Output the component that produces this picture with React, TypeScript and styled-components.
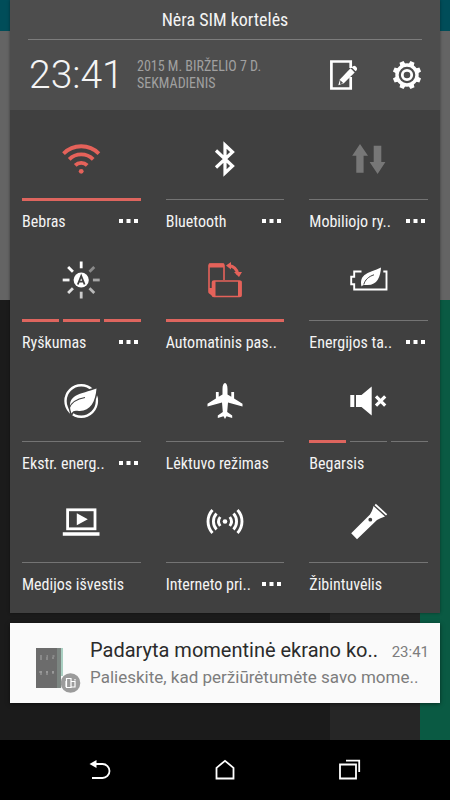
import React from "react";
import styled, { createGlobalStyle } from "styled-components";

const ACCENT = "#e5625a";
const PANEL = "#404040";
const CONDENSED = '"Roboto Condensed", "Liberation Sans Narrow", Roboto, sans-serif';

const GlobalStyle = createGlobalStyle`
  *, *::before, *::after { box-sizing: border-box; }
  body { margin: 0; background: #000; font-family: Roboto, sans-serif; }
  button { margin: 0; padding: 0; border: 0; background: none; color: inherit; font: inherit; cursor: pointer; }
  svg { display: block; }
`;

const Screen = styled.div`
  min-height: 100vh;
  display: flex;
  flex-direction: column;
`;

const Wallpaper = styled.main`
  flex: 1;
  padding: 0 10px;
  background:
    linear-gradient(#004d59, #004d59) 0 0 / 100% 31px no-repeat,
    linear-gradient(#646464, #646464) 0 31px / 100% 269px no-repeat,
    linear-gradient(#0a5a43, #0a5a43) 100% 300px / 30px 100% no-repeat,
    linear-gradient(#262626, #262626) 100% 300px / 120px 100% no-repeat,
    #1b1b1b;
`;

const Shade = styled.section`
  background: ${PANEL};
  color: #f4f4f4;
  box-shadow: 0 0 3px rgba(0, 0, 0, 0.4);
`;

const Header = styled.header`
  padding: 0 18px;
  background: #4d4d4d;
`;

const Carrier = styled.div`
  height: 40px;
  border-bottom: 1px solid #7c7c7c;
  font: 400 18px/40px ${CONDENSED};
  text-align: center;
`;

const StatusRow = styled.div`
  display: flex;
  align-items: center;
  height: 70px;
`;

const Clock = styled.time`
  width: 109px;
  padding-left: 1px;
  font: 300 39px/46px Roboto, sans-serif;
`;

const DateText = styled.div`
  flex: 1;
  color: #a0a0a0;
  font: 400 14px/17px ${CONDENSED};
`;

const HeaderActions = styled.div`
  display: flex;
  gap: 34px;
`;

const TileGrid = styled.div`
  display: grid;
  grid-template-columns: repeat(3, minmax(0, 1fr));
  column-gap: 25px;
  padding: 0 12px 19px;
`;

const Tile = styled.div`
  height: 121px;
`;

const Toggle = styled.button<{ $tone: string }>`
  display: flex;
  flex-direction: column;
  align-items: center;
  width: 100%;
  height: 91px;
  padding-top: 29px;
  color: ${(p) => p.$tone};
`;

const Bars = styled.span`
  display: flex;
  align-items: center;
  gap: 4px;
  width: 100%;
  height: 3px;
  margin-top: 19px;
`;

const Bar = styled.span<{ $on: boolean }>`
  flex: 1;
  height: ${(p) => (p.$on ? 3 : 1)}px;
  background: ${(p) => (p.$on ? "#de655e" : "#747474")};
`;

const Caption = styled.div`
  display: flex;
  align-items: center;
  justify-content: space-between;
  height: 30px;
  padding: 12px 3px 0 0;
`;

const Label = styled.span`
  white-space: nowrap;
  font: 400 16px/18px ${CONDENSED};
`;

const Card = styled.article`
  display: flex;
  margin-top: 10px;
  height: 80px;
  padding: 15px 11px 0 25px;
  background: #fafafa;
  box-shadow: 0 1px 4px rgba(0, 0, 0, 0.5);
`;

const Thumb = styled.div`
  flex: none;
  width: 55px;
  padding-top: 9px;
`;

const CardText = styled.div`
  flex: 1;
  min-width: 0;
  white-space: nowrap;
`;

const CardTop = styled.div`
  display: flex;
  align-items: baseline;
  justify-content: space-between;
`;

const CardTitle = styled.h2`
  margin: 0;
  color: #2b2b2b;
  font: 400 20px/25px Roboto, sans-serif;
`;

const CardTime = styled.time`
  color: #7d7d7d;
  font: 400 15px/25px Roboto, sans-serif;
`;

const CardBody = styled.p`
  margin: 0;
  color: #7d7d7d;
  font: 400 17px/25px Roboto, sans-serif;
`;

const NavBar = styled.nav`
  display: flex;
  height: 60px;
  padding: 0 38px;
  background: #000;
`;

const NavButton = styled.button`
  flex: 1;
  display: flex;
  align-items: center;
  justify-content: center;
  color: #fff;
`;

const Glyph = ({ children }: { children: React.ReactNode }) => (
  <svg width="40" height="40" viewBox="0 0 40 40" fill="none" aria-hidden="true">
    {children}
  </svg>
);

const WifiIcon = () => (
  <Glyph>
    <circle cx="20.2" cy="32.3" r="2.4" fill="currentColor" />
    <g stroke="currentColor" strokeWidth="3.8">
      <path d="M2.5 14.6a25 25 0 0 1 35.4 0" />
      <path d="M8.2 20.3a17 17 0 0 1 24 0" />
      <path d="M14.2 26.3a8.5 8.5 0 0 1 12 0" />
    </g>
  </Glyph>
);

const BluetoothIcon = () => (
  <Glyph>
    <path d="M11 11.5 27.5 27 20 34V6l7.5 7L11 28.5" stroke="currentColor" strokeWidth="3.2" />
  </Glyph>
);

const DataIcon = () => (
  <Glyph>
    <path
      d="M11 5l8 11.7h-4.4v17H7.3v-17H3.2zM28.6 35l-8-12h4.1V6.7h7.6V23h4.1z"
      fill="currentColor"
    />
  </Glyph>
);

const RAYS: [number, string][] = [
  [0, "#fff"],
  [45, "#8a8a8a"],
  [90, "#a6a6a6"],
  [135, "#b8b8b8"],
  [180, "#cacaca"],
  [225, "#e0e0e0"],
  [270, "#f2f2f2"],
  [315, "#fff"],
];

const BrightnessIcon = () => (
  <Glyph>
    {RAYS.map(([angle, color]) => (
      <path key={angle} d="M20.2 1.5v6.8" stroke={color} strokeWidth="2.8" transform={`rotate(${angle} 20.2 20)`} />
    ))}
    <circle cx="20.2" cy="20" r="7.6" fill="#fff" />
    <path d="M16.8 24.5 20.2 16 23.6 24.5M18 21.700h4.400" stroke={PANEL} strokeWidth="1.800" />
  </Glyph>
);

const RotateIcon = () => (
  <Glyph>
    <g stroke="currentColor" strokeWidth="1.600">
      <path d="M4 31.500V5.500Q4 4 5.500 4H17.500Q19 4 19 5.500V20M4 31.500Q4 33.500 6.500 33.500" />
      <rect x="7.500" y="21" width="28.500" height="15.500" rx="1.500" />
    </g>
    <path d="M4 3.500h15v4H4zM4 28h3.500l3 8.500H8Q4 34 4 31zM7.500 21h3v15.500h-3zM33 21h3.500v15.500H33z" fill="currentColor" />
    <path d="M23.500 5.500q8 1 9.500 9" stroke="currentColor" strokeWidth="3.200" />
    <path d="M21 5.500l5-3.500v7.500zM29 12h8l-3 5z" fill="currentColor" />
  </Glyph>
);

const BatteryIcon = () => (
  <Glyph>
    <path
      d="M12.500 11.500H5.200v5.200H2.200v7.500h3v5.300h32.300v-18h-3.200"
      stroke="currentColor"
      strokeWidth="1.900"
    />
    <path d="M32 7.500C31.500 17 28 26 17 25 15.500 25 14 24.500 12.500 26.500 10 13 20 13.500 32 7.500z" fill="currentColor" />
    <path d="M14.800 24.500C16 20 19.500 16.500 25 14.800" stroke={PANEL} strokeWidth="1" />
  </Glyph>
);

const EcoIcon = () => (
  <Glyph>
    <circle cx="20.200" cy="20" r="15.700" stroke="currentColor" strokeWidth="2.400" />
    <path
      d="M35.500 7.500C34.500 21 29 30.500 18 30 14 29.500 12 29.500 10.500 32.500 4 12.500 20 13.500 35.500 7.500z"
      fill="currentColor"
      stroke={PANEL}
      strokeWidth="3"
      paintOrder="stroke"
    />
    <path d="M8 27.500C10 22 15 18 24 16.500" stroke={PANEL} strokeWidth="1.200" />
  </Glyph>
);

const PlaneIcon = () => (
  <Glyph>
    <path
      d="M20 2c1.500 0 2.500 2.500 2.500 6v5.500l3.800 2.300V11h2.800v6.500l8.400 5.300v2.700L23 21.500l-.8 9.500 5 3.500V37L21.500 35.200 20 38l-1.500-2.800L12.800 37v-2.500l5-3.500-.8-9.500L2.500 25.500v-2.700l8.400-5.300V11h2.800v4.800l3.800-2.300V8c0-3.500 1-6 2.500-6z"
      fill="currentColor"
    />
  </Glyph>
);

const MuteIcon = () => (
  <Glyph>
    <path d="M1.300 14h4v12h-4zM7 14h5.500L22.700 5.500v29L12.500 26H7z" fill="currentColor" />
    <path d="M27 15.400l9.200 9.200M36.200 15.400 27 24.600" stroke="currentColor" strokeWidth="3.200" />
  </Glyph>
);

const MediaIcon = () => (
  <Glyph>
    <rect x="6.600" y="7.800" width="27.400" height="19" stroke="currentColor" strokeWidth="2.800" />
    <path d="M1.800 30.300h36.700v3.400H1.800zM15.800 11.300l11 6-11 6z" fill="currentColor" />
  </Glyph>
);

const HotspotIcon = () => (
  <Glyph>
    <circle cx="20" cy="19.500" r="2.300" fill="currentColor" />
    <g stroke="currentColor" strokeWidth="2.900">
      <path d="M15.200 15a7.500 7.500 0 0 0 0 9M11.500 11.500a12 12 0 0 0 0 16M7.500 8a17 17 0 0 0 0 23" />
      <path d="M24.800 15a7.500 7.500 0 0 1 0 9M28.500 11.500a12 12 0 0 1 0 16M32.500 8a17 17 0 0 1 0 23" />
    </g>
  </Glyph>
);

const TorchIcon = () => (
  <Glyph>
    <path d="M26.200 2.500 37.600 12.800" stroke="currentColor" strokeWidth="1.800" />
    <path d="M24.500 4 36 14.500Q31 16 28 18L8 37.200 2.200 31.300 21 12.500Q23.500 9 24.500 4z" fill="currentColor" />
    <circle cx="21.300" cy="17.700" r="1.900" fill={PANEL} />
  </Glyph>
);

const DotsIcon = () => (
  <svg width="19" height="18" viewBox="0 0 19 18" aria-hidden="true">
    <path d="M0 6h4v4H0zM7.500 6h4v4h-4zM15 6h4v4h-4z" fill="#fff" />
  </svg>
);

const NoteIcon = () => (
  <svg width="28" height="30" viewBox="0 0 28 30" fill="none" aria-hidden="true">
    <path d="M20.700 8V1.500H1.400v27h19.300V17" stroke="#fff" strokeWidth="2.700" />
    <path d="M20.500 8.300l4.200 4.100L13.800 23.300 8.300 25.300l1.800-6z" fill="#fff" />
    <path d="M21.500 7.300q3.200-3.300 5 0 1.500 2-.8 4z" fill="#fff" />
    <path d="M10.300 20.300l2.800 2.700-3 1.200z" fill="#4d4d4d" />
  </svg>
);

const GearIcon = () => (
  <svg width="30" height="30" viewBox="0 0 30 30" fill="none" aria-hidden="true">
    <circle cx="15" cy="15" r="10" stroke="#fff" strokeWidth="3.400" />
    {[22.5, 67.5, 112.5, 157.5, 202.5, 247.5, 292.5, 337.5].map((a) => (
      <path key={a} d="M12.300 4.500l.5-3.800h4.400l.5 3.800z" fill="#fff" transform={`rotate(${a} 15 15)`} />
    ))}
    <circle cx="15" cy="15" r="4.700" stroke="#fff" strokeWidth="2.800" />
  </svg>
);

const ThumbIcon = () => (
  <svg width="46" height="46" viewBox="0 0 46 46" fill="none" aria-hidden="true">
    <path d="M1 1h24v40H1z" fill="#6c6c6c" />
    <path d="M22 1h4v40h-4z" fill="#7c8581" />
    <path d="M26 1h2v28h-2z" fill="#a9cfc1" />
    <path d="M5 9h2M11.500 9h1.500M17.500 9h2M6 10v3M12 10v3M18 10v2M4 25h3M11 25h2M17 25h2M6 24v4M12 24v4M18 24v3" stroke="#a8a8a8" />
    <circle cx="35.500" cy="36" r="9.800" fill="#9b9b9b" />
    <path d="M31.500 31.500h4.500v9h-4.500zM36 34.500h4v5.500h-4M31 34v6M40 32v1.500" stroke="#fff" strokeWidth="1.200" />
  </svg>
);

const BackIcon = () => (
  <svg width="22" height="22" viewBox="0 0 22 22" fill="none" aria-hidden="true">
    <path d="M6 5h7.500a7 7 0 0 1 0 14H3" stroke="currentColor" strokeWidth="1.800" />
    <path d="M.5 5 7.500 1v8z" fill="currentColor" />
  </svg>
);

const HomeIcon = () => (
  <svg width="22" height="22" viewBox="0 0 22 22" fill="none" aria-hidden="true">
    <path d="M2.500 19.500V8.800L11 1.800l8.500 7v10.700z" stroke="currentColor" strokeWidth="1.800" />
  </svg>
);

const RecentIcon = () => (
  <svg width="22" height="22" viewBox="0 0 22 22" fill="none" aria-hidden="true">
    <path d="M1 5.500h16v14H1zM7 1.700h13.200V13" stroke="currentColor" strokeWidth="1.800" />
  </svg>
);

interface TileData {
  id: string;
  label: string;
  icon: React.ReactNode;
  bars: boolean[];
  tone?: string;
  more?: boolean;
}

const TILES: TileData[] = [
  { id: "wifi", label: "Bebras", icon: <WifiIcon />, bars: [true], tone: ACCENT, more: true },
  { id: "bluetooth", label: "Bluetooth", icon: <BluetoothIcon />, bars: [false], more: true },
  { id: "data", label: "Mobiliojo ry..", icon: <DataIcon />, bars: [false], tone: "#777", more: true },
  { id: "brightness", label: "Ryškumas", icon: <BrightnessIcon />, bars: [true, true, true], more: true },
  { id: "rotate", label: "Automatinis pas..", icon: <RotateIcon />, bars: [true], tone: ACCENT },
  { id: "battery", label: "Energijos ta..", icon: <BatteryIcon />, bars: [false], more: true },
  { id: "eco", label: "Ekstr. energ..", icon: <EcoIcon />, bars: [false], more: true },
  { id: "plane", label: "Lėktuvo režimas", icon: <PlaneIcon />, bars: [false] },
  { id: "mute", label: "Begarsis", icon: <MuteIcon />, bars: [true, false, false] },
  { id: "media", label: "Medijos išvestis", icon: <MediaIcon />, bars: [false] },
  { id: "hotspot", label: "Interneto pri..", icon: <HotspotIcon />, bars: [false], more: true },
  { id: "torch", label: "Žibintuvėlis", icon: <TorchIcon />, bars: [false] },
];

const QuickTile = ({ id, label, icon, bars, tone = "#fff", more }: TileData) => (
  <Tile>
    <Toggle type="button" $tone={tone} aria-labelledby={id} aria-pressed={bars[0]}>
      {icon}
      <Bars>
        {bars.map((on, i) => (
          <Bar key={i} $on={on} />
        ))}
      </Bars>
    </Toggle>
    <Caption>
      <Label id={id}>{label}</Label>
      {more && (
        <button type="button" aria-label={`${label} nustatymai`}>
          <DotsIcon />
        </button>
      )}
    </Caption>
  </Tile>
);

export default function App() {
  return (
    <Screen>
      <GlobalStyle />
      <Wallpaper>
        <Shade>
          <Header>
            <Carrier>Nėra SIM kortelės</Carrier>
            <StatusRow>
              <Clock>23:41</Clock>
              <DateText>
                2015 M. BIRŽELIO 7 D.
                <br />
                SEKMADIENIS
              </DateText>
              <HeaderActions>
                <button type="button" aria-label="Redaguoti">
                  <NoteIcon />
                </button>
                <button type="button" aria-label="Nustatymai">
                  <GearIcon />
                </button>
              </HeaderActions>
            </StatusRow>
          </Header>
          <TileGrid>
            {TILES.map((t) => (
              <QuickTile key={t.id} {...t} />
            ))}
          </TileGrid>
        </Shade>
        <Card>
          <Thumb>
            <ThumbIcon />
          </Thumb>
          <CardText>
            <CardTop>
              <CardTitle>Padaryta momentinė ekrano ko..</CardTitle>
              <CardTime>23:41</CardTime>
            </CardTop>
            <CardBody>Palieskite, kad peržiūrėtumėte savo mome..</CardBody>
          </CardText>
        </Card>
      </Wallpaper>
      <NavBar>
        <NavButton type="button" aria-label="Atgal">
          <BackIcon />
        </NavButton>
        <NavButton type="button" aria-label="Pradžia">
          <HomeIcon />
        </NavButton>
        <NavButton type="button" aria-label="Naujausi">
          <RecentIcon />
        </NavButton>
      </NavBar>
    </Screen>
  );
}
